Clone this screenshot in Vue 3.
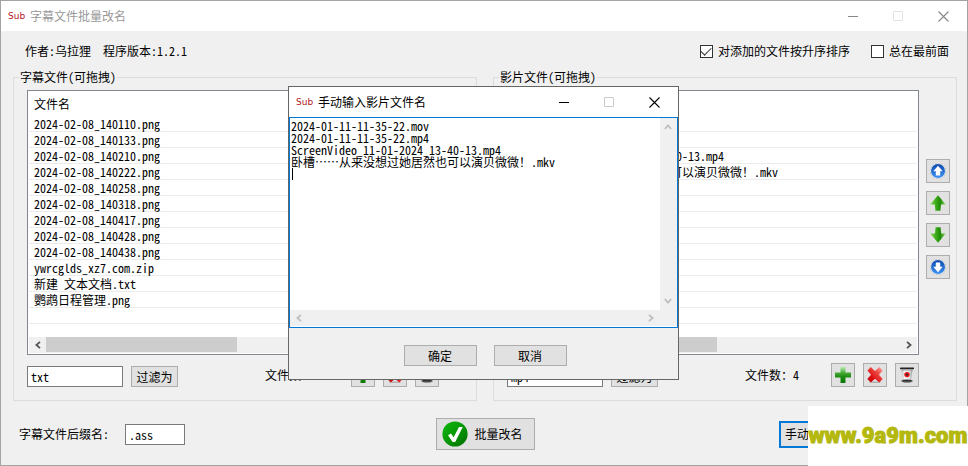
<script setup>
import { ref } from 'vue'

const about = '作者:乌拉狸  程序版本:1.2.1'
const sortAscending = ref(true)
const alwaysOnTop = ref(false)
const suffix = ref('.ass')

const movieNames = [
  '2024-01-11-11-35-22.mov',
  '2024-01-11-11-35-22.mp4',
  'ScreenVideo_11-01-2024_13-40-13.mp4',
  '卧槽……从来没想过她居然也可以演贝微微！.mkv',
]
const manualInput = ref(movieNames.join('\n') + '\n')

const groups = ref([
  {
    id: 'subtitle',
    title: '字幕文件(可拖拽)',
    column: '文件名',
    filter: 'txt',
    files: [
      '2024-02-08_140110.png',
      '2024-02-08_140133.png',
      '2024-02-08_140210.png',
      '2024-02-08_140222.png',
      '2024-02-08_140258.png',
      '2024-02-08_140318.png',
      '2024-02-08_140417.png',
      '2024-02-08_140428.png',
      '2024-02-08_140438.png',
      'ywrcglds_xz7.com.zip',
      '新建 文本文档.txt',
      '鹦鹉日程管理.png',
    ],
  },
  { id: 'movie', title: '影片文件(可拖拽)', column: '文件名', filter: 'mp4', files: movieNames },
])

const ROWS = 13
const moveIcons = ['top', 'up', 'down', 'bottom']
const fileIcons = ['add', 'remove', 'clear']
</script>

<template>
  <svg class="defs" aria-hidden="true">
    <defs>
      <linearGradient id="g-green" x1="0" y1="0" x2="0" y2="1">
        <stop offset="0" stop-color="#b9ecb0" /><stop offset=".35" stop-color="#49ad38" />
        <stop offset=".6" stop-color="#1f8c12" /><stop offset="1" stop-color="#0a7603" />
      </linearGradient>
      <linearGradient id="g-arrow" x1="0" y1="0" x2="1" y2="0">
        <stop offset="0" stop-color="#8fdc5c" /><stop offset=".35" stop-color="#3fae1c" />
        <stop offset=".65" stop-color="#1f8a08" /><stop offset="1" stop-color="#9be070" />
      </linearGradient>
      <linearGradient id="g-red" x1="1" y1="0" x2="0" y2="1">
        <stop offset="0" stop-color="#ffb0a8" /><stop offset=".35" stop-color="#ee4a44" />
        <stop offset=".7" stop-color="#dc0d10" /><stop offset="1" stop-color="#b80008" />
      </linearGradient>
      <linearGradient id="g-blue" x1="0" y1="0" x2="0" y2="1">
        <stop offset="0" stop-color="#0b48ae" /><stop offset="1" stop-color="#3f93f2" />
      </linearGradient>
      <linearGradient id="g-bin" x1="0" y1="0" x2="1" y2="0">
        <stop offset="0" stop-color="#b9b9b9" /><stop offset=".3" stop-color="#f6f6f6" />
        <stop offset=".7" stop-color="#e4e4e4" /><stop offset="1" stop-color="#9a9a9a" />
      </linearGradient>
      <linearGradient id="g-ok" x1="0" y1="0" x2="1" y2="1">
        <stop offset="0" stop-color="#12b80e" /><stop offset=".5" stop-color="#069806" />
        <stop offset="1" stop-color="#006c00" />
      </linearGradient>
    </defs>
    <symbol id="i-add" viewBox="0 0 16 16">
      <path d="M5.5 0h5v5.5H16v5h-5.500V16h-5v-5.500H0v-5h5.500z" fill="url(#g-green)" />
    </symbol>
    <symbol id="i-remove" viewBox="0 0 16 16">
      <ellipse cx="8" cy="15.200" rx="6" ry=".8" fill="#999" opacity=".7" />
      <path d="M.5 3.500 3.800 0 8 4 12.200 0 15.700 3.400 12 7.800l3.700 4.200-3.400 3.400L8 11.800l-4.200 3.600L.3 12l3.700-4.200z" fill="url(#g-red)" />
    </symbol>
    <symbol id="i-clear" viewBox="0 0 16 16">
      <path d="M2.500 3h11l-1.400 9.500h-8.200z" fill="url(#g-bin)" />
      <rect x="1" y=".4" width="14" height="1.800" rx=".6" fill="#222" />
      <path d="M2 3h12" stroke="#999" />
      <circle cx="8" cy="7.600" r="2.700" fill="#e11" /><circle cx="8" cy="7.600" r="1.200" fill="#333" />
      <ellipse cx="8" cy="14" rx="5.800" ry="1.700" fill="#777" />
      <path d="M3.600 13.800h8.800" stroke="#222" stroke-width="1.300" />
    </symbol>
    <symbol id="i-up" viewBox="0 0 16 16">
      <path d="M8 .3 15.800 9.500H11l-.6 6.200H5.400L4.800 9.500H.2z" fill="url(#g-arrow)" />
    </symbol>
    <symbol id="i-down" viewBox="0 0 16 16">
      <path d="M8 15.700.2 6.500H5l.6-6.200h5l.6 6.200h4.600z" fill="url(#g-arrow)" />
    </symbol>
    <symbol id="i-top" viewBox="0 0 16 16">
      <circle cx="8" cy="8" r="7.700" fill="#f4f6fa" stroke="#a5a9b0" stroke-width=".6" stroke-dasharray="2 1" />
      <circle cx="8" cy="8" r="7" fill="url(#g-blue)" />
      <path d="M8 2.800 12.700 8.200H10.200v4.300H5.800V8.200H3.300z" fill="#fff" />
    </symbol>
    <symbol id="i-bottom" viewBox="0 0 16 16">
      <circle cx="8" cy="8" r="7.700" fill="#f4f6fa" stroke="#a5a9b0" stroke-width=".6" stroke-dasharray="2 1" />
      <circle cx="8" cy="8" r="7" fill="url(#g-blue)" />
      <path d="M8 13.200 3.300 7.800H5.800V3.500h4.400V7.800h2.500z" fill="#fff" />
    </symbol>
    <symbol id="i-ok" viewBox="0 0 26 26">
      <circle cx="13" cy="13" r="12.600" fill="url(#g-ok)" />
      <path d="M6 14.200 9 12.600l2.600 3.600L17 6h3.800l-7.600 15h-2.600z" fill="#fff" />
    </symbol>
    <symbol id="i-left" viewBox="0 0 8 8"><path d="M6 .8 2.400 4 6 7.200" fill="none" stroke="currentColor" stroke-width="1.800" /></symbol>
    <symbol id="i-right" viewBox="0 0 8 8"><path d="M2 .8 5.600 4 2 7.200" fill="none" stroke="currentColor" stroke-width="1.800" /></symbol>
    <symbol id="i-scrollup" viewBox="0 0 8 8"><path d="M.8 6 4 2.400 7.200 6" fill="none" stroke="currentColor" stroke-width="1.800" /></symbol>
    <symbol id="i-scrolldown" viewBox="0 0 8 8"><path d="M.8 2 4 5.600 7.200 2" fill="none" stroke="currentColor" stroke-width="1.800" /></symbol>
    <symbol id="i-min" viewBox="0 0 11 11"><path d="M0 5.500h10" stroke="currentColor" /></symbol>
    <symbol id="i-max" viewBox="0 0 11 11"><path d="M.5 .5h9v9h-9z" fill="none" stroke="currentColor" /></symbol>
    <symbol id="i-close" viewBox="0 0 11 11"><path d="M.5 .5l10 10M10.500 .5l-10 10" stroke="currentColor" stroke-width="1.100" /></symbol>
  </svg>

  <main class="window">
    <header class="titlebar inactive">
      <span class="logo">Sub</span>
      <h1 class="caption">字幕文件批量改名</h1>
      <button class="sys" aria-label="最小化"><svg><use href="#i-min" /></svg></button>
      <button class="sys disabled" aria-label="最大化"><svg><use href="#i-max" /></svg></button>
      <button class="sys" aria-label="关闭"><svg><use href="#i-close" /></svg></button>
    </header>

    <div class="content">
      <div class="info">
        <span class="about">{{ about }}</span>
        <label class="check"><input v-model="sortAscending" type="checkbox" />对添加的文件按升序排序</label>
        <label class="check"><input v-model="alwaysOnTop" type="checkbox" />总在最前面</label>
      </div>

      <div class="groups">
        <fieldset v-for="group in groups" :key="group.id" class="group">
          <legend>{{ group.title }}</legend>
          <div class="group-body">
            <div class="list-column">
              <div class="list">
                <table>
                  <thead>
                    <tr><th>{{ group.column }}</th></tr>
                  </thead>
                  <tbody>
                    <tr v-for="n in ROWS" :key="n"><td>{{ group.files[n - 1] }}</td></tr>
                  </tbody>
                </table>
                <div class="hscroll">
                  <button aria-label="向左滚动"><svg><use href="#i-left" /></svg></button>
                  <div class="track"><div class="thumb"></div></div>
                  <button aria-label="向右滚动"><svg><use href="#i-right" /></svg></button>
                </div>
              </div>
              <div class="tools">
                <input v-model="group.filter" class="field filter" type="text" aria-label="后缀" />
                <button class="btn filter-btn">过滤为</button>
                <span class="count">文件数：{{ group.files.length }}</span>
                <button v-for="icon in fileIcons" :key="icon" class="btn icon-btn" :aria-label="icon">
                  <svg><use :href="'#i-' + icon" /></svg>
                </button>
              </div>
            </div>
            <div class="side">
              <button v-for="icon in moveIcons" :key="icon" class="btn icon-btn" :aria-label="icon">
                <svg><use :href="'#i-' + icon" /></svg>
              </button>
            </div>
          </div>
        </fieldset>
      </div>

      <footer class="footer">
        <div class="suffix">
          <label for="suffix">字幕文件后缀名:</label>
          <input id="suffix" v-model="suffix" class="field" type="text" />
        </div>
        <button class="btn rename"><svg><use href="#i-ok" /></svg>批量改名</button>
        <button class="btn manual">手动输入影片文件名</button>
      </footer>
    </div>
  </main>

  <section class="dialog" role="dialog" aria-labelledby="dialog-title">
    <header class="titlebar">
      <span class="logo">Sub</span>
      <h2 id="dialog-title" class="caption">手动输入影片文件名</h2>
      <button class="sys" aria-label="最小化"><svg><use href="#i-min" /></svg></button>
      <button class="sys disabled" aria-label="最大化"><svg><use href="#i-max" /></svg></button>
      <button class="sys" aria-label="关闭"><svg><use href="#i-close" /></svg></button>
    </header>
    <div class="editor">
      <textarea v-model="manualInput" wrap="off" spellcheck="false" aria-labelledby="dialog-title"></textarea>
      <span class="caret"></span>
      <div class="bar vertical">
        <svg><use href="#i-scrollup" /></svg>
        <svg><use href="#i-scrolldown" /></svg>
      </div>
      <div class="bar">
        <svg><use href="#i-left" /></svg>
        <svg><use href="#i-right" /></svg>
      </div>
      <div class="bar"></div>
    </div>
    <div class="actions">
      <button class="btn">确定</button>
      <button class="btn">取消</button>
    </div>
  </section>

  <div class="watermark">www.9a9m.com</div>
</template>

<style>
body {
  margin: 0;
  background: #f0f0f0;
}
#app {
  position: relative;
}
</style>

<style scoped>
* {
  box-sizing: border-box;
}
.defs {
  position: absolute;
  width: 0;
  height: 0;
}
.window,
.dialog,
button,
input,
textarea {
  font-family: "Noto Sans CJK SC", "Liberation Mono", sans-serif;
  font-size: 12px;
  font-feature-settings: "hwid";
  line-height: 12px;
  color: #000;
}
button {
  padding: 0;
  margin: 0;
  border: 0;
  background: none;
}
.window {
  border: 1px solid #a3a3a3;
  background: #f0f0f0;
}

/* title bars */
.titlebar {
  display: flex;
  align-items: center;
  height: 30px;
  padding: 0 1px 0 7px;
  background: #fff;
}
.logo {
  width: 22px;
  font: 9px/12px "DejaVu Sans", sans-serif;
  color: #b3161f;
}
.caption {
  flex: 1;
  margin: 0;
  font-size: 12px;
  font-weight: 400;
}
.inactive .caption {
  color: #999;
}
.sys {
  display: flex;
  align-items: center;
  justify-content: center;
  width: 45px;
  height: 30px;
}
.sys svg {
  width: 11px;
  height: 11px;
}
.inactive .sys {
  color: #888;
}
.sys.disabled {
  color: #ccc;
}
.inactive .sys.disabled {
  color: #e4e4e4;
}

/* main window */
.content {
  padding: 0 10px 0 12px;
}
.info {
  display: flex;
  align-items: center;
  height: 40px;
  padding: 0 8px 0 12px;
}
.about {
  flex: 1;
  white-space: pre;
}
.check {
  display: flex;
  align-items: center;
  gap: 5px;
  margin-left: 21px;
}
.check input {
  display: grid;
  place-items: center;
  width: 13px;
  height: 13px;
  margin: 0;
  appearance: none;
  border: 1px solid #333;
  background: #fff;
}
.check input:checked::before {
  content: "";
  width: 9px;
  height: 5px;
  margin-bottom: 3px;
  border: solid #333;
  border-width: 0 0 1px 1px;
  transform: rotate(-45deg);
}
.groups {
  display: grid;
  grid-template-columns: 1fr 1fr;
  gap: 16px;
}
.group {
  min-width: 0;
  margin: 0;
  padding: 7px 6px 13px 13px;
  border: 1px solid #dcdcdc;
}
.group legend {
  height: 12px;
  margin-left: -8px;
  padding: 0 1px;
}
.group-body {
  display: flex;
  gap: 7px;
}
.list-column {
  flex: 1;
  min-width: 0;
}
.list {
  padding: 1px;
  border: 1px solid #828790;
  background: #fff;
}
table {
  width: 100%;
  border-spacing: 0;
  table-layout: fixed;
}
th,
td {
  padding: 0 5px;
  font-weight: 400;
  text-align: left;
  white-space: pre;
}
th {
  height: 24px;
}
td {
  height: 16px;
  border-bottom: 1px solid #ececec;
}
.hscroll {
  display: flex;
  height: 16px;
  margin-top: 13px;
  background: #f0f0f0;
  color: #555;
}
.hscroll button {
  width: 17px;
  color: inherit;
}
.hscroll svg {
  display: block;
  width: 8px;
  height: 8px;
  margin: auto;
}
.track {
  flex: 1;
}
.thumb {
  width: 51%;
  height: 15px;
  background: #cdcdcd;
}
.tools {
  display: flex;
  align-items: flex-end;
  gap: 8px;
  margin-top: 8px;
}
.field {
  height: 21px;
  padding: 0 3px;
  border: 1px solid #7a7a7a;
  background: #fff;
}
.filter {
  width: 96px;
}
.btn {
  height: 21px;
  border: 1px solid #adadad;
  background: #e1e1e1;
}
.filter-btn {
  width: 47px;
}
.count {
  width: 78px;
  margin-left: auto;
  padding-bottom: 6px;
}
.icon-btn {
  display: flex;
  align-items: center;
  justify-content: center;
  width: 24px;
  height: 24px;
}
.icon-btn svg {
  width: 16px;
  height: 16px;
}
.side {
  display: flex;
  flex-direction: column;
  gap: 8px;
  padding-top: 69px;
}
.footer {
  display: grid;
  grid-template-columns: 1fr auto 1fr;
  align-items: center;
  padding: 17px 0 15px;
}
.suffix {
  display: flex;
  align-items: center;
  gap: 16px;
  padding-left: 6px;
}
.suffix .field {
  width: 60px;
}
.rename {
  display: flex;
  align-items: center;
  gap: 7px;
  width: 99px;
  height: 32px;
  padding-left: 5px;
}
.rename svg {
  width: 26px;
  height: 26px;
}
.manual {
  justify-self: end;
  height: 27px;
  margin-right: 58px;
  padding: 0 4px;
  border: 2px solid #0078d7;
}

/* manual input dialog */
.dialog {
  position: absolute;
  top: 86px;
  left: 288px;
  width: 391px;
  border: 1px solid #666;
  background: #f0f0f0;
}
.editor {
  position: relative;
  display: grid;
  grid-template-columns: 1fr 17px;
  grid-template-rows: 192px 16px;
  padding-bottom: 1px;
  border: 1px solid #0078d7;
  background: #fff;
}
textarea {
  width: 100%;
  height: 100%;
  padding: 2px 1px;
  border: 0;
  outline: 0;
  resize: none;
  overflow: hidden;
  background: #fff;
}
.caret {
  position: absolute;
  top: 50px;
  left: 2px;
  width: 1px;
  height: 12px;
  background: #000;
}
.bar {
  display: flex;
  align-items: center;
  justify-content: space-between;
  padding: 0 5px;
  background: #f0f0f0;
  color: #bfbfbf;
}
.bar.vertical {
  flex-direction: column;
  padding: 5px 2px 5px 0;
}
.bar svg {
  width: 8px;
  height: 8px;
}
.actions {
  display: flex;
  justify-content: center;
  gap: 17px;
  padding: 17px 0 13px 3px;
}
.actions .btn {
  width: 73px;
}

.watermark {
  position: absolute;
  right: 0;
  bottom: 0;
  width: 160px;
  height: 60px;
  background: #fff;
  color: #b4b80e;
  font: 900 22px/60px Roboto, sans-serif;
  -webkit-text-stroke: 1px #b4b80e;
  text-align: center;
  white-space: nowrap;
}
</style>
